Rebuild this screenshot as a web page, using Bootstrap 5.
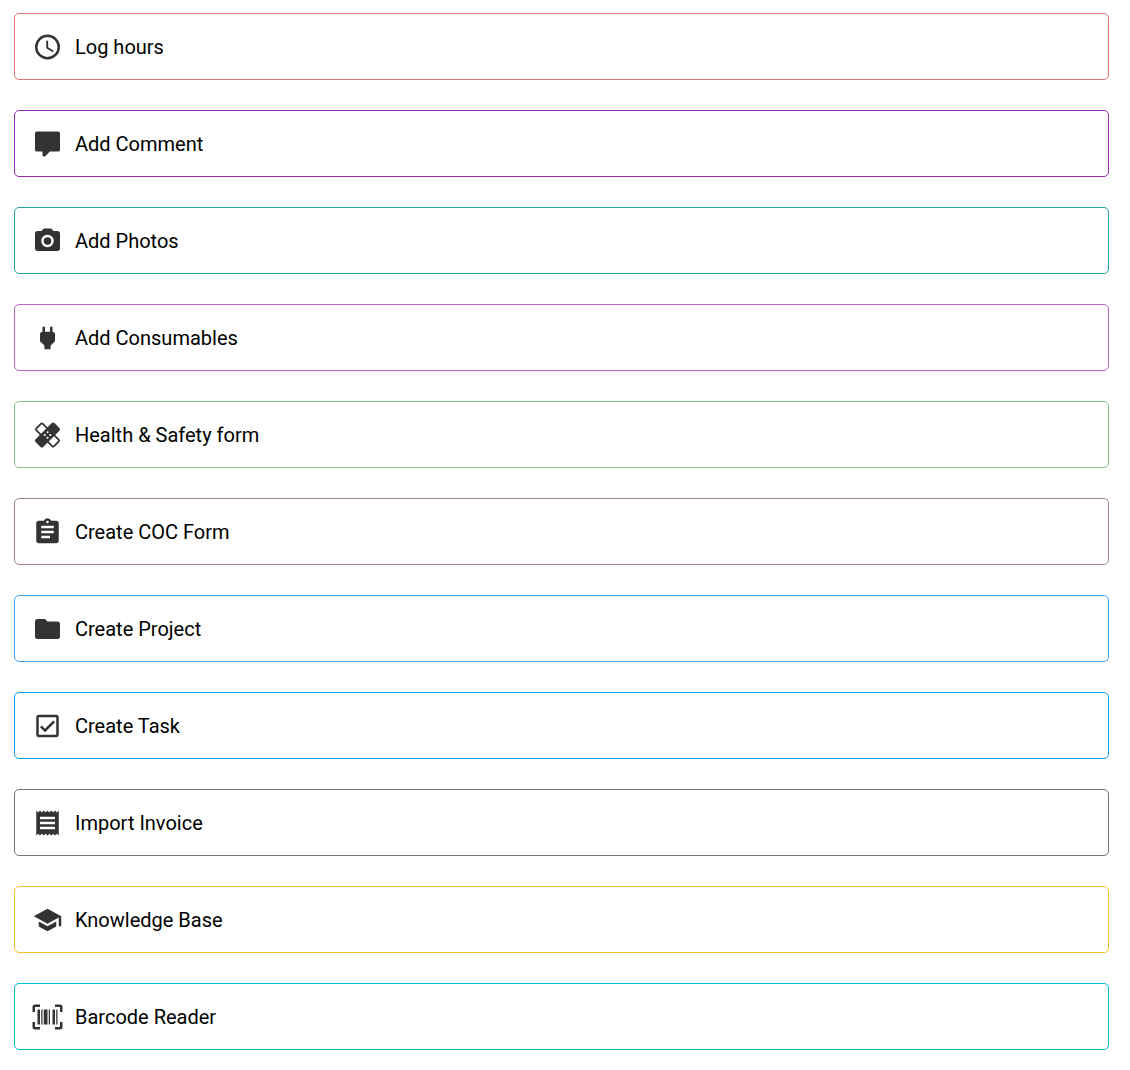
<!DOCTYPE html>
<html lang="en">
<head>
<meta charset="utf-8">
<meta name="viewport" content="width=device-width, initial-scale=1">
<title>Quick actions</title>
<link href="https://cdn.jsdelivr.net/npm/bootstrap@5.3.0/dist/css/bootstrap.min.css" rel="stylesheet">
<style>
body{font-family:Roboto,"Liberation Sans",sans-serif;background:#fff;color:#000}
.actions{padding:13px 21px 20px 14px;gap:30px}
.action{height:67px;border:1px solid var(--edge);border-radius:5px;padding:0 17px;font-size:20px;line-height:30px;color:#000;text-decoration:none;background:#fff}
.action svg{width:31px;height:30px;fill:#333;margin-right:12px}
.c-red{--edge:#e57373}.c-purple{--edge:#9c27b0}.c-teal{--edge:#26a69a}.c-orchid{--edge:#ba68c8}
.c-green{--edge:#81c784}.c-brown{--edge:#a1887f}.c-blue{--edge:#42a5f5}.c-sky{--edge:#0b9ff5}
.c-grey{--edge:#757575}.c-amber{--edge:#fbc02d}.c-cyan{--edge:#00bcd4}
</style>
</head>
<body>
<main class="actions d-flex flex-column">
<a class="action c-red d-flex align-items-center" href="#"><svg viewBox="0 0 24 24"><path d="M12 20A8 8 0 1 0 12 4a8 8 0 0 0 0 16M12 2a10 10 0 1 1 0 20 10 10 0 0 1 0-20M12.5 7v5.25l4.5 2.67-.75 1.23L11 13V7h1.5Z"/></svg><span>Log hours</span></a>
<a class="action c-purple d-flex align-items-center" href="#"><svg viewBox="0 0 24 24"><path d="M9 22a1 1 0 0 1-1-1v-3H3.500A1.500 1.500 0 0 1 2 16.500v-13C2 2.670 2.670 2 3.500 2h17A1.500 1.500 0 0 1 22 3.500v13a1.500 1.500 0 0 1-1.500 1.500h-6.600l-3.700 3.710c-.2.19-.45.29-.7.29H9Z"/></svg><span>Add Comment</span></a>
<a class="action c-teal d-flex align-items-center" href="#"><svg viewBox="0 0 24 24"><circle cx="12" cy="12" r="3"/><path d="M9 2 7.17 4H4c-1.1 0-2 .9-2 2v12c0 1.1.9 2 2 2h16c1.1 0 2-.9 2-2V6c0-1.1-.9-2-2-2h-3.17L15 2H9zm3 15a5 5 0 1 1 0-10 5 5 0 0 1 0 10z"/></svg><span>Add Photos</span></a>
<a class="action c-orchid d-flex align-items-center" href="#"><svg viewBox="0 0 24 24"><path d="M16 7V3h-2v4h-4V3H8v4C7 7 6 8 6 9v5.5L9.500 18v3h5v-3l3.500-3.500V9c0-1-1-2-2-2Z"/></svg><span>Add Consumables</span></a>
<a class="action c-green d-flex align-items-center" href="#"><svg viewBox="0 0 24 24"><g transform="rotate(45 12 12)"><rect x="2" y="8.400" width="20" height="7.200" rx=".8" fill="none" stroke="#333" stroke-width="1.400"/></g><g transform="rotate(-45 12 12)"><rect x="1.300" y="7.700" width="21.400" height="8.600" rx="1.500"/></g><g fill="#fff"><circle cx="12" cy="9.800" r=".85"/><circle cx="9.800" cy="12" r=".85"/><circle cx="14.200" cy="12" r=".85"/><circle cx="12" cy="14.200" r=".85"/></g></svg><span>Health &amp; Safety form</span></a>
<a class="action c-brown d-flex align-items-center" href="#"><svg viewBox="0 0 24 24"><path d="M19 3h-4.180C14.400 1.840 13.300 1 12 1s-2.400.84-2.820 2H5c-1.100 0-2 .9-2 2v14c0 1.100.9 2 2 2h14c1.100 0 2-.9 2-2V5c0-1.100-.9-2-2-2zm-7 0a1 1 0 1 1 0 2 1 1 0 0 1 0-2zm2 14H7v-2h7v2zm3-4H7v-2h10v2zm0-4H7V7h10v2z"/></svg><span>Create COC Form</span></a>
<a class="action c-blue d-flex align-items-center" href="#"><svg viewBox="0 0 24 24"><path d="M10 4H4c-1.110 0-2 .89-2 2v12a2 2 0 0 0 2 2h16a2 2 0 0 0 2-2V8c0-1.110-.9-2-2-2h-8l-2-2Z"/></svg><span>Create Project</span></a>
<a class="action c-sky d-flex align-items-center" href="#"><svg viewBox="0 0 24 24"><path d="M19 3H5c-1.110 0-2 .89-2 2v14c0 1.110.89 2 2 2h14c1.110 0 2-.89 2-2V5c0-1.110-.89-2-2-2m0 2v14H5V5h14m-9 12-4-4 1.410-1.410L10 14.170l6.590-6.590L18 9l-8 8Z"/></svg><span>Create Task</span></a>
<a class="action c-grey d-flex align-items-center" href="#"><svg viewBox="0 0 24 24"><path d="M18 17H6v-2h12v2zm0-4H6v-2h12v2zm0-4H6V7h12v2zM3 22l1.500-1.500L6 22l1.500-1.500L9 22l1.500-1.500L12 22l1.500-1.500L15 22l1.500-1.500L18 22l1.500-1.500L21 22V2l-1.500 1.500L18 2l-1.500 1.500L15 2l-1.500 1.500L12 2l-1.500 1.500L9 2 7.500 3.500 6 2 4.500 3.500 3 2v20z"/></svg><span>Import Invoice</span></a>
<a class="action c-amber d-flex align-items-center" href="#"><svg viewBox="0 0 24 24"><path d="M5 13.180v4L12 21l7-3.820v-4L12 17l-7-3.820zM12 3 1 9l11 6 9-4.910V17h2V9L12 3z"/></svg><span>Knowledge Base</span></a>
<a class="action c-cyan d-flex align-items-center" href="#"><svg viewBox="0 0 24 24"><path d="M4 6h2v12H4V6m3 0h1v12H7V6m2 0h3v12H9V6m4 0h1v12h-1V6m3 0h2v12h-2V6m3 0h1v12h-1V6M2 4v4H0V4a2 2 0 0 1 2-2h4v2H2m20-2a2 2 0 0 1 2 2v4h-2V4h-4V2h4M2 16v4h4v2H2a2 2 0 0 1-2-2v-4h2m20 4v-4h2v4a2 2 0 0 1-2 2h-4v-2h4Z"/></svg><span>Barcode Reader</span></a>
</main>
<script src="https://cdn.jsdelivr.net/npm/bootstrap@5.3.0/dist/js/bootstrap.bundle.min.js"></script>
</body>
</html>
